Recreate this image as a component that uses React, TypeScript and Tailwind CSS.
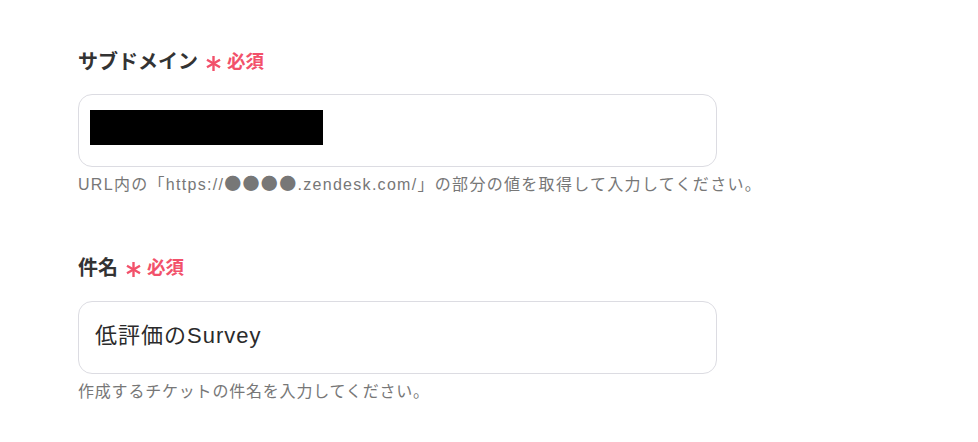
function RequiredMark() {
  return (
    <span className="ml-[7px] flex items-center gap-[5px] text-[#f2516a]">
      <svg width="17" height="17" viewBox="0 0 17 17" className="mt-[2px]">
        <g stroke="currentColor" strokeWidth="2.4" strokeLinecap="butt">
          <line x1="8.5" y1="1" x2="8.5" y2="16" />
          <line x1="2" y1="4.75" x2="15" y2="12.25" />
          <line x1="2" y1="12.25" x2="15" y2="4.75" />
        </g>
      </svg>
      <span className="text-[18.5px] font-bold">必須</span>
    </span>
  );
}

export default function App() {
  const font = { fontFamily: '"Liberation Sans", "Noto Sans CJK JP", sans-serif' };
  return (
    <main className="w-[978px] h-[442px] bg-white pl-[78px] pt-[48px]" style={font}>
      {/* サブドメイン */}
      <section>
        <div className="flex items-center h-[28px]">
          <span className="text-[20px] font-semibold text-[#333333]">サブドメイン</span>
          <RequiredMark />
        </div>
        <div className="mt-[18px] w-[639px] h-[73px] rounded-[14px] border border-[#dcdce2] flex items-start pt-[15px] px-[11px]">
          <div className="w-[233px] h-[35px] bg-black" />
        </div>
        <p className="mt-[6px] h-[24px] text-[16px] leading-[24px] tracking-[1.3px] text-[#777777] whitespace-nowrap">
          URL内の「https://
          <span className="text-[17px] leading-none" style={{ fontFamily: '"Noto Sans CJK JP", sans-serif' }}>●●●●</span>
          .zendesk.com/」の部分の値を取得して入力してください。
        </p>
      </section>

      {/* 件名 */}
      <section className="mt-[57px]">
        <div className="flex items-center h-[28px]">
          <span className="text-[20px] font-semibold text-[#333333]">件名</span>
          <RequiredMark />
        </div>
        <div className="mt-[19px] w-[639px] h-[73px] rounded-[14px] border border-[#dcdce2] flex items-center px-[16px] pb-[4px]">
          <span className="text-[22px] tracking-[1px] text-[#2b2b2b]">低評価のSurvey</span>
        </div>
        <p className="mt-[6px] text-[16px] leading-[24px] tracking-[0.8px] text-[#777777]">
          作成するチケットの件名を入力してください。
        </p>
      </section>
    </main>
  );
}
